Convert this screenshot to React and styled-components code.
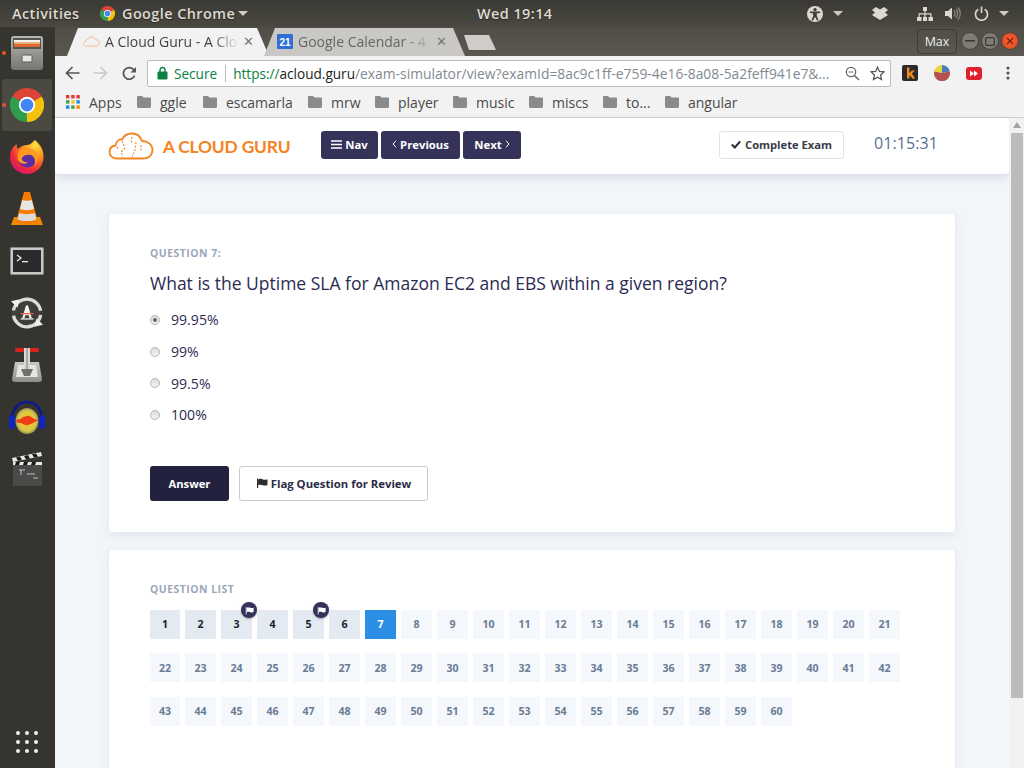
import React from "react";
import styled, { createGlobalStyle } from "styled-components";

const Global = createGlobalStyle`
  html, body { margin: 0; padding: 0; background: #35342f; }
  body { font-family: "Open Sans", "Noto Sans", sans-serif; }
  * { box-sizing: border-box; }
`;

const Screen = styled.div`
  width: 1024px; height: 768px; overflow: hidden;
  display: flex; flex-direction: column; background: #35342f;
`;
const TopBar = styled.div`
  height: 27px; flex: none; display: flex; align-items: center; padding-right: 15px;
  background: linear-gradient(#3a3933, #4a4841);
  color: #dfdbd2; font-size: 14.4px; font-weight: 600;
  text-shadow: 0 1px 1px #2a2925;
`;
const TopLabel = styled.span`
  margin-left: ${p => p.$ml || 0}px; width: ${p => p.$w}px; flex: none;
  letter-spacing: .45px; white-space: nowrap;
`;
const TopIcon = styled.svg`
  margin-left: ${p => p.$ml === "auto" ? "auto" : `${p.$ml || 0}px`}; flex: none; display: block;
`;
const Body = styled.div`flex: 1; display: flex; min-height: 0;`;
const Dock = styled.nav`
  width: 55px; flex: none; display: flex; flex-direction: column; padding-right: 1px;
  align-items: center; background: #35342f;
`;
const DockItem = styled.div`
  position: relative; width: 50px; height: 52px; flex: none;
  display: flex; align-items: center; justify-content: center; border-radius: 3px;
  background: ${p => p.$active ? "#4a4942" : "transparent"};
  ${p => p.$running && `&::before{content:"";position:absolute;left:0;top:24px;width:4px;height:4px;border-radius:50%;background:#e95420;}`}
`;
const AppsGrid = styled.div`
  margin-top: auto; margin-bottom: 15px;
  display: grid; grid-template-columns: repeat(3, 4.5px); gap: 4.5px;
  span { width: 4.5px; height: 4.5px; border-radius: 50%; background: #f0efec; }
`;
const Main = styled.div`flex: 1; min-width: 0; display: flex; flex-direction: column;`;

const TabStrip = styled.div`
  height: 29px; flex: none; display: flex; align-items: flex-end;
  background: linear-gradient(#4f4d46, #5a5850); padding-left: 12px; position: relative;
`;
const Tab = styled.div`
  width: ${p => p.$w}px; height: 28px; margin-right: ${p => p.$mr || 0}px; flex: none;
  display: flex; align-items: center; padding: 0 0 2px ${p => p.$pl || 14}px;
  font-size: 14px; white-space: nowrap;
  color: ${p => p.$active ? "#444" : "#666"};
  background: ${p => p.$active ? "#f2f2f2" : "#c9c8c4"};
  clip-path: polygon(0 100%, 11px 0, calc(100% - 12px) 0, 100% 100%);
`;
const TabTitle = styled.span`
  width: ${p => p.$w}px; overflow: hidden; margin-left: ${p => p.$ml || 5}px; flex: none;
  -webkit-mask-image: linear-gradient(90deg, #000 80%, transparent);
  mask-image: linear-gradient(90deg, #000 80%, transparent);
`;
const TabClose = styled.span`
  margin-left: 4px; font-size: 13px; color: #777; line-height: 1;
`;
const NewTab = styled.div`
  width: 32px; height: 15px; margin: 0 0 6px -1px; background: #cfcdc9;
  clip-path: polygon(0 0, 25px 0, 100% 100%, 5px 100%);
`;
const MaxBtn = styled.div`
  position: absolute; left: 862px; top: 2px; width: 40px; height: 25px;
  border: 1px solid #3d3c37; border-radius: 4px;
  display: flex; align-items: center; justify-content: center;
  color: #eee; font-size: 12.5px;
`;
const WinBtn = styled.div`
  position: absolute; left: ${p => p.$x}px; top: 5px; width: 18px; height: 18px; border-radius: 50%;
  background: ${p => p.$red ? "radial-gradient(#f4683a, #e0431a)" : "#7d7b73"};
  border: 1px solid #45433d;
  display: flex; align-items: center; justify-content: center;
`;
const Toolbar = styled.div`
  height: 34px; flex: none; display: flex; align-items: center; background: #f2f2f2; position: relative;
`;
const NavIcon = styled.svg`
  margin-left: ${p => p.$ml || 0}px; margin-right: ${p => p.$mr || 0}px; flex: none; display: block;
`;
const Omni = styled.div`
  margin-left: 10px; width: 744px; height: 27px; flex: none; background: #fff;
  border: 1px solid #bcbcbc; border-radius: 2px;
  display: flex; align-items: center; font-size: 13.6px; white-space: nowrap; overflow: hidden;
`;
const Green = styled.span`color: #0b8043;`;
const Sep = styled.span`width: 1px; height: 17px; background: #bbb; margin: 0 7px 0 8px; flex: none;`;
const Host = styled.span`color: #222;`;
const Path = styled.span`color: #7f8a92; width: 490px; flex: none; overflow: hidden; font-size: 13.85px;`;
const Bookmarks = styled.div`
  height: 28px; flex: none; display: flex; align-items: center; background: #f2f2f2;
  border-bottom: 1px solid #cfcfcf; padding: 0 0 3px 11px; font-size: 14px; color: #4a4a4a;
`;
const Bookmark = styled.div`
  width: ${p => p.$w}px; flex: none; display: flex; align-items: center; gap: 9px; white-space: nowrap;
`;

const Viewport = styled.div`flex: 1; min-height: 0; display: flex; background: #f2f5f9;`;
const Page = styled.main`flex: 1; min-width: 0;`;
const Scrollbar = styled.div`
  width: 15px; flex: none; background: #f1f1f1; padding: 4px 1px 0 2px;
  display: flex; flex-direction: column; align-items: center;
`;
const ScrollUp = styled.div`
  width: 0; height: 0; border: 4px solid transparent; border-top: 0;
  border-bottom: 6px solid #a3a3a3; margin-bottom: 5px;
`;
const ScrollThumb = styled.div`width: 12px; height: 565px; background: #bcbcbc;`;

const Header = styled.header`
  height: 56px; background: #fff; border-radius: 0 0 4px 4px;
  box-shadow: 0 4px 10px rgba(80,100,140,.16);
  display: flex; align-items: flex-start; padding: 13px 0 0 53px;
`;
const Logo = styled.div`
  display: flex; align-items: center; gap: 9px; width: 213px; height: 30px; flex: none;
  color: #f5831f; font-family: Lato, sans-serif; font-weight: 700; font-size: 17.4px; letter-spacing: -.2px; white-space: nowrap;
`;
const DarkBtn = styled.button`
  height: 28px; width: ${p => p.$w}px; margin-right: 3px; border: 0; border-radius: 3px; flex: none;
  background: #353359; color: #fff; padding: 0 0 2px; font: 700 11.3px "Open Sans", sans-serif;
  display: flex; align-items: center; justify-content: center; gap: 3px;
`;
const CompleteBtn = styled.button`
  margin-left: 195px; width: 125px; height: 28px; flex: none; background: #fff; border: 1px solid #e3e3e3; border-radius: 3px;
  color: #3a3a4a; padding: 0 0 1px; font: 700 11.2px "Open Sans", sans-serif;
  display: flex; align-items: center; justify-content: center; gap: 4px;
`;
const Timer = styled.div`
  margin-left: 30px; line-height: 24px; color: #566f8f; font-size: 16px; letter-spacing: .1px;
`;
const Card = styled.section`
  margin: ${p => p.$mt}px 54px 0 54px; background: #fff; border-radius: 3px;
  box-shadow: 0 3px 10px rgba(80,100,140,.1);
  padding: ${p => p.$pt}px 40px 0 41px;
  height: ${p => p.$h}px;
`;
const SmallHead = styled.div`
  font-size: 10.4px; font-weight: 700; letter-spacing: .52px; color: #9aa7ba; line-height: 14px;
`;
const Question = styled.h1`
  margin: 11px 0 0; font-size: 17.5px; font-weight: 400; color: #2b2b52; line-height: 25px; white-space: nowrap;
`;
const Options = styled.div`margin-top: 14px; display: flex; flex-direction: column; gap: 12px;`;
const Option = styled.label`
  display: flex; align-items: center; height: 19.7px; font-size: 14.1px; color: #2b2b52;
`;
const Radio = styled.span`
  width: 10px; height: 10px; border-radius: 50%; margin-right: 11px; flex: none;
  background: linear-gradient(#ddd, #f3f3f3); border: 1px solid #b4b4b4;
  display: flex; align-items: center; justify-content: center;
  ${p => p.$on && `&::after{content:"";width:4px;height:4px;border-radius:50%;background:#666;}`}
`;
const Actions = styled.div`margin-top: 41px; display: flex; gap: 10px;`;
const AnswerBtn = styled.button`
  width: 79px; height: 35px; border: 0; border-radius: 3px; background: #22223f; color: #fff;
  padding: 0; font: 700 11.2px "Open Sans", sans-serif;
`;
const FlagBtn = styled.button`
  width: 189px; height: 35px; border: 1px solid #ccc; border-radius: 3px; background: #fff; color: #2b2b45;
  padding: 0; font: 700 11.35px "Open Sans", sans-serif;
  display: flex; align-items: center; justify-content: center; gap: 3px;
`;
const GridWrap = styled.div`margin-top: 14px; margin-left: -1px; display: flex; flex-direction: column; gap: 14.65px;`;
const GridRow = styled.div`display: flex; gap: 5px; height: 28.75px;`;
const Cell = styled.div`
  position: relative; width: 31px; height: 100%; flex: none;
  display: flex; align-items: center; justify-content: center;
  font-size: 10.6px; font-weight: 700;
  background: ${p => p.$current ? "#2a8fe4" : p.$done ? "#e4eaf1" : "#f4f7fb"};
  color: ${p => p.$current ? "#fff" : p.$done ? "#1f2030" : "#6b7c95"};
  &:first-child { width: 30px; margin-left: 1px; }
`;
const Badge = styled.span`
  position: absolute; right: -5px; top: -8px; width: 16px; height: 16px; border-radius: 50%;
  background: #353359; box-shadow: 0 1px 2px rgba(0,0,0,.3);
  display: flex; align-items: center; justify-content: center;
`;

const ChromeLogo = ({ s }) => (
  <svg width={s} height={s} viewBox="0 0 48 48" style={{ display: "block", flex: "none" }}>
    <path d="M24 24L3.2 12A24 24 0 0 1 44.8 12Z" fill="#db4437" />
    <path d="M24 24L44.8 12A24 24 0 0 1 24 48Z" fill="#f4c20d" />
    <path d="M24 24L24 48A24 24 0 0 1 3.2 12Z" fill="#2f9e4f" />
    <circle cx="24" cy="24" r="11.5" fill="#fff" />
    <circle cx="24" cy="24" r="9" fill="#4285f4" />
  </svg>
);
const Cloud = ({ w, h, c, sw, dashes }) => (
  <svg width={w} height={h} viewBox="0 0 46 28" style={{ display: "block", flex: "none" }}>
    <path d="M9 26.5C4.5 26.5 1.5 23.5 1.5 20C1.5 16.5 4 14 7.5 13.5C8.5 8.5 11.5 7 14 7.5C16 3.5 20 1.5 24 1.5C29 1.5 32.5 4.5 34 9C40 9 44.5 13 44.5 18C44.5 23 40.5 26.5 36 26.5Z" fill="none" stroke={c} strokeWidth={sw} />
    {dashes && <path d="M14 9L17 16L13 20L15 25M24 5L23 12M28 10L27 18L24 25M9 15L11 18M33 13L33 19" fill="none" stroke={c} strokeWidth="1.1" strokeDasharray="2 1.6" />}
  </svg>
);
const Folder = () => (
  <svg width="14" height="12" viewBox="0 0 14 12" style={{ display: "block", flex: "none" }}>
    <path d="M0 1.2C0 .5.5 0 1.2 0H5L6.5 1.6H12.8C13.5 1.6 14 2.1 14 2.8V10.8C14 11.5 13.5 12 12.8 12H1.2C.5 12 0 11.5 0 10.8Z" fill="#8a8a8a" />
  </svg>
);
const AppsIcon = () => (
  <svg width="14" height="14" viewBox="0 0 14 14" style={{ display: "block", flex: "none" }}>
    {[["#e53935","#e53935","#e53935"],["#43a047","#fbc02d","#1e88e5"],["#1e88e5","#43a047","#fb8c00"]].map((r, y) =>
      r.map((c, x) => <rect key={`${x}${y}`} x={x * 5.2} y={y * 5.2} width="3.4" height="3.4" fill={c} />))}
  </svg>
);
const FlagIcon = ({ s, c }) => (
  <svg width={s} height={s} viewBox="0 0 12 12" style={{ display: "block", flex: "none" }}>
    <rect x="1" y="1.5" width="1.1" height="9.5" fill={c} />
    <path d="M2.1 2.4C4 1.6 5.5 1.8 7 2.4C8.5 3 9.8 2.9 11.5 2.2V8C9.8 8.7 8.5 8.8 7 8.2C5.5 7.6 4 7.4 2.1 8.2Z" fill={c} />
  </svg>
);
const Caret = ({ ml }) => (
  <TopIcon $ml={ml} width="10" height="5" viewBox="0 0 10 5"><path d="M0 0H10L5 5Z" fill="#cfcbc2" /></TopIcon>
);

const CabinetIcon = () => (
  <svg width="32" height="36" viewBox="0 0 32 36">
    <defs>
      <linearGradient id="cab" x1="0" y1="0" x2="0" y2="1"><stop offset="0" stopColor="#b9b7b2" /><stop offset="1" stopColor="#777570" /></linearGradient>
    </defs>
    <rect x="0" y="1" width="32" height="34" rx="3" fill="url(#cab)" />
    <rect x="2" y="3" width="28" height="11" fill="#56544f" />
    <rect x="3" y="5" width="26" height="2" fill="#f4f4f0" />
    <rect x="3" y="7" width="26" height="2" fill="#eab07a" />
    <rect x="3" y="9" width="26" height="3" fill="#d9682c" />
    <rect x="11" y="20" width="10" height="7" rx="1" fill="#e7e6e3" stroke="#5f5d58" />
  </svg>
);
const FirefoxIcon = () => (
  <svg width="36" height="36" viewBox="0 0 36 36">
    <defs>
      <radialGradient id="ffa" cx=".75" cy=".15" r="1">
        <stop offset="0" stopColor="#ffe03a" /><stop offset=".4" stopColor="#ff8a1f" /><stop offset=".75" stopColor="#f0263f" /><stop offset="1" stopColor="#c5187e" />
      </radialGradient>
    </defs>
    <path d="M26 1C32 6 35 12 34.5 19C34 28 27 35 18 35C8 35 1 27 1 18C1 12 4 7 8 5C7.5 7 8 9 9 10C12 7 15 6 18 6C22 6 23 3 26 1Z" fill="url(#ffa)" />
    <circle cx="18.5" cy="19" r="9.5" fill="#5a2da5" />
    <path d="M11 11C15 9 22 8 27 13C30 17 29 24 25 27C27 22 26 18 22 16C19 15 14 16 13 19C12 21 15 24 19 23C17 26 11 25 9 21C8 17 9 13 11 11Z" fill="#ff9a1f" />
  </svg>
);
const VlcIcon = () => (
  <svg width="32" height="36" viewBox="0 0 32 36">
    <path d="M3 26H29L32 34H0Z" fill="#f08a00" />
    <path d="M13 1H19L27 31C22 33.5 10 33.5 5 31Z" fill="#f47c00" />
    <path d="M11.2 9C13.5 10 18.5 10 20.8 9L23 18C19 19.5 13 19.5 9 18Z" fill="#e6e6e6" />
    <path d="M8.2 22C12 23.5 20 23.5 23.8 22L25.5 28.5C20 30.5 12 30.5 6.5 28.5Z" fill="#dcdcdc" />
  </svg>
);
const TerminalIcon = () => (
  <svg width="34" height="28" viewBox="0 0 34 28">
    <rect x=".5" y=".5" width="33" height="27" rx="1" fill="#c8c8c6" stroke="#8a8a88" />
    <rect x="3" y="3" width="28" height="22" fill="#2b2b2e" />
    <path d="M7 8L11 11L7 14" fill="none" stroke="#e8e8e8" strokeWidth="1.3" />
    <rect x="12" y="14" width="6" height="1.3" fill="#e8e8e8" />
  </svg>
);
const UpdaterIcon = () => (
  <svg width="34" height="34" viewBox="0 0 32 32">
    <circle cx="16" cy="16" r="15" fill="#3f3e3a" />
    <circle cx="16" cy="16" r="13" fill="none" stroke="#dcdcda" strokeWidth="3" strokeDasharray="36 5 36 5" strokeDashoffset="-2" />
    <path d="M1 5L9 3L7 11ZM31 27L23 29L25 21Z" fill="#f0f0ee" />
    <path d="M11.5 21L15 9H17L20.5 21H18.4L17.6 18H14.4L13.6 21Z" fill="#f2f2f2" />
    <rect x="10" y="16" width="12" height="1.2" fill="#e8674a" />
    <rect x="10" y="21" width="12" height="1.2" fill="#f2f2f2" />
  </svg>
);
const InstallIcon = () => (
  <svg width="30" height="36" viewBox="0 0 30 36">
    <defs>
      <linearGradient id="ins" x1="0" y1="0" x2="0" y2="1"><stop offset="0" stopColor="#c8c8c4" /><stop offset="1" stopColor="#8d8d89" /></linearGradient>
    </defs>
    <path d="M3 15H27L30 32C30 34 29 35 27 35H3C1 35 0 34 0 32Z" fill="url(#ins)" />
    <path d="M6 18H24L26 30H4Z" fill="#e4e4e1" />
    <rect x="3" y="1" width="24" height="4" rx="1.5" fill="#d8221d" />
    <rect x="12" y="1" width="6" height="21" fill="#d8d8d5" />
    <rect x="14" y="1" width="2" height="21" fill="#a8a8a5" />
    <path d="M9 22H21L18 29H12Z" fill="#6f6f6c" />
  </svg>
);
const AudacityIcon = () => (
  <svg width="38" height="34" viewBox="0 0 38 34">
    <defs>
      <radialGradient id="aud" cx=".5" cy=".5" r=".55">
        <stop offset="0" stopColor="#f6c21a" /><stop offset=".7" stopColor="#d9c84a" /><stop offset="1" stopColor="#77775a" />
      </radialGradient>
    </defs>
    <ellipse cx="19" cy="21" rx="11.5" ry="13" fill="url(#aud)" />
    <path d="M8 21C11 18 12 20 14 18C16 16 17 17 19 16C22 15 24 19 30 20C26 22 24 24 20 25C16 26 15 23 12 23C10 23 9 22 8 21Z" fill="#ef3d14" />
    <path d="M4 20C4 8 11 2 19 2C27 2 34 8 34 20" fill="none" stroke="#0a1a8c" strokeWidth="2.6" />
    <rect x="1" y="15" width="6" height="14" rx="3" fill="#1026c0" />
    <rect x="31" y="15" width="6" height="14" rx="3" fill="#1026c0" />
  </svg>
);
const ClapperIcon = () => (
  <svg width="32" height="36" viewBox="0 0 32 36">
    <rect x="2" y="13" width="29" height="22" fill="#4a4a48" />
    <path d="M1 7L30 1L31 5L2 11Z" fill="#e8e8e6" />
    <path d="M5 6.5L9 5.6L11 9L7 9.9ZM13 5L17 4L19 7.5L15 8.3ZM21 3.3L25 2.4L27 5.8L23 6.6Z" fill="#1a1a1a" />
    <rect x="2" y="11" width="29" height="3" fill="#e8e8e6" />
    <path d="M5 11H9L8 14H4ZM13 11H17L16 14H12ZM21 11H25L24 14H20Z" fill="#1a1a1a" />
    <path d="M8 19H14M10 19V24M16 23H24M22 27H27" stroke="#bdbdbb" strokeWidth="1.1" fill="none" />
  </svg>
);

const bookmarks = [["ggle", 66], ["escamarla", 105], ["mrw", 67], ["player", 78], ["music", 76], ["miscs", 74], ["to...", 62], ["angular", 90]];
const rows = [
  Array.from({ length: 21 }, (_, i) => i + 1),
  Array.from({ length: 21 }, (_, i) => i + 22),
  Array.from({ length: 18 }, (_, i) => i + 43),
];
const options = ["99.95%", "99%", "99.5%", "100%"];

export default function App() {
  return (
    <Screen>
      <Global />
      <TopBar>
        <TopLabel $ml={12} $w={68}>Activities</TopLabel>
        <TopIcon as="span" $ml={20}><ChromeLogo s={15} /></TopIcon>
        <TopLabel $ml={7} $w={111}>Google Chrome</TopLabel>
        <Caret ml={5} />
        <TopLabel $ml={229}>Wed 19:14</TopLabel>
        <TopIcon $ml="auto" width="18" height="18" viewBox="0 0 18 18">
          <circle cx="9" cy="9" r="8" fill="#dcd8cf" />
          <circle cx="9" cy="4.6" r="1.7" fill="#3e3d37" />
          <path d="M3.8 6.4H14.2V7.8L10.8 8.6V11L12.6 15.4H11L9 11.8L7 15.4H5.4L7.2 11V8.6L3.8 7.8Z" fill="#3e3d37" />
        </TopIcon>
        <Caret ml={9} />
        <TopIcon $ml={29} width="16" height="13" viewBox="0 0 16 13">
          <path d="M0 3L4 0L8 2.5L12 0L16 3L13 5.5L16 8L12 10.5L8 13L4 10.5L0 8L3 5.5Z" fill="#dcd8cf" />
        </TopIcon>
        <TopIcon $ml={29} width="16" height="16" viewBox="0 0 16 16">
          <path d="M6 1H10V5H8.6V7.3H14.5V11H16V15H11.5V11H13.3V8.5H8.6V11H10V15H6V11H7.4V8.5H2.7V11H4.5V15H0V11H1.5V7.3H7.4V5H6Z" fill="#dcd8cf" />
        </TopIcon>
        <TopIcon $ml={12} width="16" height="15" viewBox="0 0 16 15">
          <path d="M0 5H3L7 1.5V13.5L3 10H0Z" fill="#dcd8cf" />
          <path d="M9 4.5C10.5 6 10.5 9 9 10.5M11 3C13.2 5.3 13.2 9.7 11 12M13 1.5C16 4.5 16 10.5 13 13.5" fill="none" stroke="#8f8c83" strokeWidth="1.2" />
        </TopIcon>
        <TopIcon $ml={13} width="15" height="15" viewBox="0 0 15 15">
          <path d="M4.3 3.2A6 6 0 1 0 10.7 3.2" fill="none" stroke="#dcd8cf" strokeWidth="1.6" />
          <rect x="6.7" y="0.5" width="1.6" height="6.5" fill="#dcd8cf" />
        </TopIcon>
        <Caret ml={10} />
      </TopBar>
      <Body>
        <Dock>
          <DockItem $running><CabinetIcon /></DockItem>
          <DockItem $running $active><ChromeLogo s={34} /></DockItem>
          <DockItem><FirefoxIcon /></DockItem>
          <DockItem><VlcIcon /></DockItem>
          <DockItem><TerminalIcon /></DockItem>
          <DockItem><UpdaterIcon /></DockItem>
          <DockItem><InstallIcon /></DockItem>
          <DockItem><AudacityIcon /></DockItem>
          <DockItem><ClapperIcon /></DockItem>
          <AppsGrid>{Array.from({ length: 9 }, (_, i) => <span key={i} />)}</AppsGrid>
        </Dock>
        <Main>
          <TabStrip>
            <Tab $active $w={202} $mr={-5} $pl={16}>
              <Cloud w={17} h={11} c="#f7b48a" sw="2.4" />
              <TabTitle $w={134} $ml={5}>A Cloud Guru - A Clo</TabTitle>
              <TabClose>✕</TabClose>
            </Tab>
            <Tab $w={201} $pl={13}>
              <svg width="16" height="15" viewBox="0 0 16 15" style={{ display: "block", flex: "none" }}>
                <rect width="16" height="15" rx="1" fill="#2f6fd8" />
                <text x="8" y="12" fontSize="10" fontWeight="700" fill="#fff" textAnchor="middle" fontFamily="Liberation Sans">21</text>
              </svg>
              <TabTitle $w={134} $ml={5}>Google Calendar - 4</TabTitle>
              <TabClose>✕</TabClose>
            </Tab>
            <NewTab />
            <MaxBtn>Max</MaxBtn>
            <WinBtn $x={906}><svg width="10" height="2"><rect width="10" height="1.6" fill="#3a3934" /></svg></WinBtn>
            <WinBtn $x={926}><svg width="10" height="9"><rect x=".7" y=".7" width="8.6" height="7.6" rx="1" fill="none" stroke="#3a3934" strokeWidth="1.2" /></svg></WinBtn>
            <WinBtn $x={946} $red><svg width="8" height="8"><path d="M1 1L7 7M7 1L1 7" stroke="#7a1f08" strokeWidth="1.4" /></svg></WinBtn>
          </TabStrip>
          <Toolbar>
            <NavIcon $ml={10} width="15" height="14" viewBox="0 0 15 14"><path d="M14.5 7H2M7.5 1L1.5 7L7.5 13" fill="none" stroke="#555" strokeWidth="1.7" /></NavIcon>
            <NavIcon $ml={13} width="15" height="14" viewBox="0 0 15 14"><path d="M.5 7H13M7.5 1L13.5 7L7.5 13" fill="none" stroke="#c9c9c9" strokeWidth="1.7" /></NavIcon>
            <NavIcon $ml={14} width="15" height="15" viewBox="0 0 15 15">
              <path d="M12.6 9.6A5.8 5.8 0 1 1 11.4 3.4L13.2 5" fill="none" stroke="#555" strokeWidth="1.7" />
              <path d="M14 1V6.5H8.5Z" fill="#555" />
            </NavIcon>
            <Omni>
              <NavIcon $ml={9} $mr={6} width="11" height="14" viewBox="0 0 11 14">
                <path d="M3 6V4A2.5 2.5 0 0 1 8 4V6" fill="none" stroke="#0b8043" strokeWidth="1.4" />
                <rect x=".5" y="5.5" width="10" height="8" rx="1" fill="#0b8043" />
              </NavIcon>
              <Green>Secure</Green>
              <Sep />
              <Green>https://</Green>
              <Host>acloud.guru</Host>
              <Path>/exam-simulator/view?examId=8ac9c1ff-e759-4e16-8a08-5a2feff941e7&...</Path>
              <NavIcon $ml={0} width="15" height="15" viewBox="0 0 15 15">
                <circle cx="6" cy="6" r="4.7" fill="none" stroke="#666" strokeWidth="1.3" />
                <path d="M9.5 9.5L14 14" stroke="#666" strokeWidth="1.5" />
                <path d="M3.6 6H8.4" stroke="#666" strokeWidth="1.1" />
              </NavIcon>
              <NavIcon $ml={10} width="15" height="15" viewBox="0 0 15 15">
                <path d="M7.5 1.2L9.4 5.4L14 5.9L10.6 9L11.5 13.6L7.5 11.3L3.5 13.6L4.4 9L1 5.9L5.6 5.4Z" fill="none" stroke="#555" strokeWidth="1.3" />
              </NavIcon>
            </Omni>
            <NavIcon $ml={11} width="16" height="16" viewBox="0 0 16 16">
              <rect width="16" height="16" rx="2" fill="#2b2b2b" />
              <path d="M5 2.5H7.4V8L10 5.5H13L9.8 8.6L13.2 13.5H10.3L8 10.2L7.4 10.8V13.5H5Z" fill="#f28c1e" />
            </NavIcon>
            <NavIcon $ml={16} width="16" height="16" viewBox="0 0 16 16">
              <path d="M8 8L.2 6.5A8 8 0 0 1 8 0Z" fill="#e8d63a" />
              <path d="M8 8V0A8 8 0 0 1 15.8 6.5Z" fill="#4a7fb8" />
              <path d="M8 8L15.8 6.5A8 8 0 1 1 .2 6.5Z" fill="#b5524f" />
            </NavIcon>
            <NavIcon $ml={16} width="16" height="13" viewBox="0 0 16 13">
              <rect width="16" height="13" rx="3" fill="#e0202c" />
              <path d="M4 3.5L8 6.5L4 9.5ZM8 3.5L12 6.5L8 9.5Z" fill="#fff" />
            </NavIcon>
            <NavIcon $ml={24} width="4" height="14" viewBox="0 0 4 14">
              <circle cx="2" cy="2" r="1.6" fill="#555" /><circle cx="2" cy="7" r="1.6" fill="#555" /><circle cx="2" cy="12" r="1.6" fill="#555" />
            </NavIcon>
          </Toolbar>
          <Bookmarks>
            <Bookmark $w={71}><AppsIcon />Apps</Bookmark>
            {bookmarks.map(([t, w]) => <Bookmark key={t} $w={w}><Folder />{t}</Bookmark>)}
          </Bookmarks>
          <Viewport>
            <Page>
              <Header>
                <Logo><Cloud w={46} h={28} c="#f5831f" sw="1.8" dashes />A CLOUD GURU</Logo>
                <DarkBtn $w={57}>
                  <svg width="11" height="9" viewBox="0 0 11 9"><path d="M0 1H11M0 4.5H11M0 8H11" stroke="#fff" strokeWidth="1.6" /></svg>
                  Nav
                </DarkBtn>
                <DarkBtn $w={79}>
                  <svg width="5" height="8" viewBox="0 0 5 8"><path d="M4 .7L1 4L4 7.3" fill="none" stroke="#fff" /></svg>
                  Previous
                </DarkBtn>
                <DarkBtn $w={58}>
                  Next
                  <svg width="5" height="8" viewBox="0 0 5 8"><path d="M1 .7L4 4L1 7.3" fill="none" stroke="#fff" /></svg>
                </DarkBtn>
                <CompleteBtn>
                  <svg width="10" height="9" viewBox="0 0 10 9"><path d="M.8 4.5L3.8 7.5L9.2 1.4" fill="none" stroke="#2b2b3a" strokeWidth="2" /></svg>
                  Complete Exam
                </CompleteBtn>
                <Timer>01:15:31</Timer>
              </Header>
              <Card $mt={40} $pt={32} $h={318}>
                <SmallHead>QUESTION 7:</SmallHead>
                <Question>What is the Uptime SLA for Amazon EC2 and EBS within a given region?</Question>
                <Options>
                  {options.map((o, i) => <Option key={o}><Radio $on={i === 0} />{o}</Option>)}
                </Options>
                <Actions>
                  <AnswerBtn>Answer</AnswerBtn>
                  <FlagBtn><FlagIcon s={12} c="#2b2b2b" />Flag Question for Review</FlagBtn>
                </Actions>
              </Card>
              <Card $mt={18} $pt={32} $h={240}>
                <SmallHead>QUESTION LIST</SmallHead>
                <GridWrap>
                  {rows.map((r, i) => (
                    <GridRow key={i}>
                      {r.map(n => (
                        <Cell key={n} $done={n < 7} $current={n === 7}>
                          {n}
                          {(n === 3 || n === 5) && <Badge><FlagIcon s={9} c="#fff" /></Badge>}
                        </Cell>
                      ))}
                    </GridRow>
                  ))}
                </GridWrap>
              </Card>
            </Page>
            <Scrollbar><ScrollUp /><ScrollThumb /></Scrollbar>
          </Viewport>
        </Main>
      </Body>
    </Screen>
  );
}
